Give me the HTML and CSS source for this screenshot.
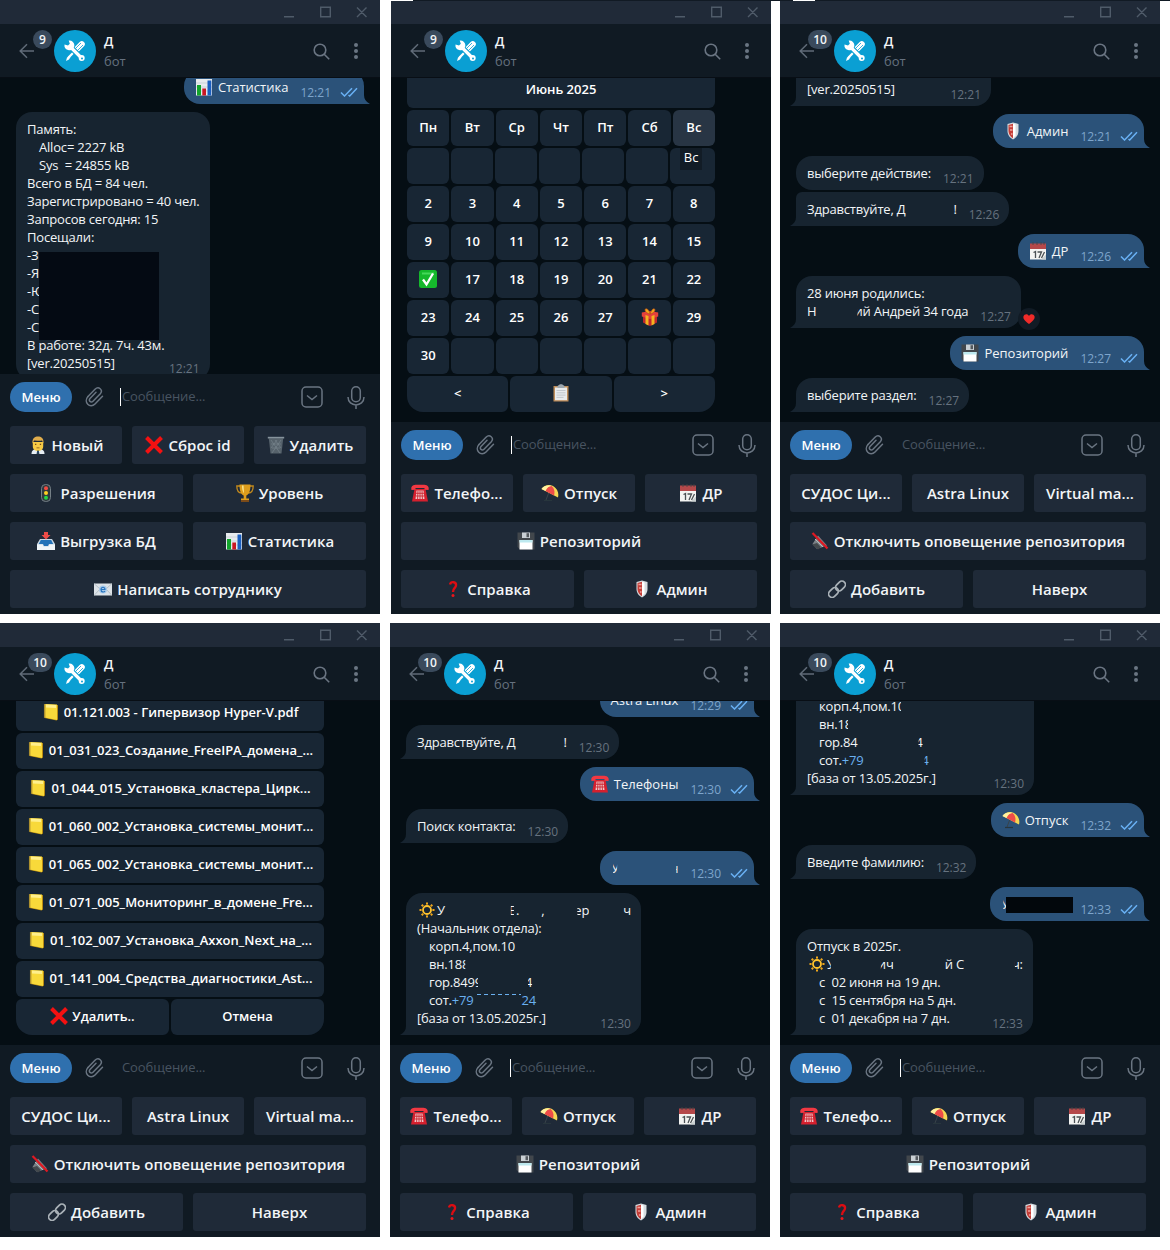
FILE: index.html
```html
<!DOCTYPE html>
<html lang="ru">
<head>
<meta charset="utf-8">
<title>Бот</title>
<link rel="stylesheet" href="styles.css">
</head>
<body>
<svg class="defs" xmlns="http://www.w3.org/2000/svg">
  <symbol id="wctl" viewBox="0 0 84 12"><g fill="none" stroke="#4f5b69" stroke-width="1.4"><path d="M0 10.7h10M36.700 1.200h9.600v9.600h-9.600zM73 1.500l9.500 9.500M82.500 1.500L73 11"/></g></symbol>
  <symbol id="back" viewBox="0 0 16 16"><path d="M15 8H1.500M8 1.200L1.200 8l6.800 6.800" fill="none" stroke="#606b78" stroke-width="1.500"/></symbol>
  <symbol id="tools" viewBox="0 0 24 24"><path d="M5.500 18.500L13 11" stroke="#fff" stroke-width="2.300"/><path d="M3 22l1-3.500 2.500-1.500 1 1-1.500 2.500z" fill="#fff"/><path d="M13.200 10.800L18.800 5.200" stroke="#fff" stroke-width="6" stroke-linecap="round"/><path d="M12.500 9.500L18 4M14.500 11.500L20 6" stroke="#0a9fd3" stroke-width=".8"/><path d="M7 7.500L18.500 19" stroke="#0a9fd3" stroke-width="5.500"/><path d="M7.500 8L18.500 19" stroke="#fff" stroke-width="3.200"/><circle cx="18.700" cy="19" r="3" fill="#fff"/><circle cx="19" cy="19.400" r="1" fill="#0a9fd3"/><path d="M1.500 5.500l3.500 1 1.800-1.800L5.700 1.500a5 5 0 0 1 5.300 6.800A5 5 0 0 1 1.500 5.500z" fill="#fff"/></symbol>
  <symbol id="search" viewBox="0 0 17 17"><g fill="none" stroke="#6a7582" stroke-width="1.600"><circle cx="7" cy="7" r="5.800"/><path d="M11.200 11.200l5 5"/></g></symbol>
  <symbol id="dots" viewBox="0 0 6 18"><g fill="#6a7582"><circle cx="3" cy="3" r="2"/><circle cx="3" cy="9" r="2"/><circle cx="3" cy="15" r="2"/></g></symbol>
  <symbol id="clip" viewBox="0 0 20 22"><path d="M3 10.500L10 3.300c3.500-3.500 8.500.5 5.300 4.500L8 15.200c-2 2-5-.5-3-2.700l6-6.200" transform="translate(1 0)" fill="none" stroke="#6a7582" stroke-width="1.500" stroke-linecap="round"/><path d="M3 10.500c-5 5.500 2 12.500 7 7.500l7.500-7.800" transform="translate(1 0)" fill="none" stroke="#6a7582" stroke-width="1.500" stroke-linecap="round"/></symbol>
  <symbol id="cmd" viewBox="0 0 22 22"><g fill="none" stroke="#6a7582" stroke-width="1.500"><rect x="1" y="1" width="20" height="20" rx="4"/><path d="M6 9.500l5 4 5-4"/></g></symbol>
  <symbol id="mic" viewBox="0 0 18 23"><g fill="none" stroke="#6a7582" stroke-width="1.500"><rect x="4.700" y=".8" width="8.600" height="15" rx="4.300"/><path d="M1 11c0 10.500 16 10.500 16 0M9 19v4"/></g></symbol>
  <symbol id="read" viewBox="0 0 18 10"><path d="M1 5.500l3.500 3.500L12 1.200M8.500 8l1.200 1L17 1.200" fill="none" stroke="#69b0f3" stroke-width="1.500"/></symbol>

  <symbol id="chart" viewBox="0 0 18 18"><path fill="#e7ebee" d="M1 1h16v16.500H1z"/><path d="M1 5h16M1 9h16M1 13h16" stroke="#b9c4cc" stroke-width=".6"/><path fill="#12a52c" d="M2 7h4v10.500H2z"/><path fill="#c91722" d="M7.300 10.500h3.700v7H7.300z"/><path fill="#1a5fc0" d="M12.500 2.500h3.800v15h-3.800z"/></symbol>
  <symbol id="man" viewBox="0 0 18 18"><path fill="#e6edf3" d="M2.500 18c0-4 2.500-5 6.500-5s6.500 1 6.500 5z"/><path fill="#f7cb45" d="M3.800 6h10.400v4.500c0 6-10.400 6-10.400 0z"/><path fill="#e0ad4c" d="M3.500 7.500C3 2 6 .5 9 .5s6 1.500 5.500 7L13 4.500C10 5.500 7 4 5 4.500z"/><path fill="#7d4a18" d="M6 7.800h1.300v1.200H6zM10.800 7.800h1.300v1.200h-1.300zM7.500 11.500h3v.8h-3z"/><path fill="#27435d" d="M8.200 14.500h1.600l.6 3.500H7.600z"/></symbol>
  <symbol id="cross" viewBox="0 0 18 18"><path d="M1.500 1.500l15 15M16.500 1.500l-15 15" stroke="#f41111" stroke-width="4"/></symbol>
  <symbol id="bin" viewBox="0 0 18 18"><path fill="#56626b" d="M1.800 2.500h14.400l-1.700 15h-11z"/><path d="M4 4l9 13M8 4l6 8M14 4L5 17M10 4l-6 8M4 8h10M5 12h8" stroke="#7c8992" stroke-width=".6"/><path fill="#86939c" d="M.8 .8h16.400v1.700H.8z"/></symbol>
  <symbol id="light" viewBox="0 0 18 18"><rect x="4.500" y=".5" width="9" height="17" rx="4" fill="#303a3f" stroke="#758087"/><circle cx="9" cy="4.300" r="2" fill="#f24b42"/><circle cx="9" cy="9" r="2" fill="#ffcf22"/><circle cx="9" cy="13.700" r="2" fill="#27d544"/></symbol>
  <symbol id="cup" viewBox="0 0 18 18"><path d="M4 2H.8c0 5 2 7 5 7M14 2h3.200c0 5-2 7-5 7" fill="none" stroke="#c48a1c" stroke-width="1.300"/><path fill="#dd9d1c" d="M3.500.5h11c0 6.500-1.500 10-4.200 11v3H13V18H5v-3.500h2.700v-3C5 10.500 3.500 7 3.500.5z"/><path fill="#fbe48a" d="M6 1.500h1.500l.5 8C6.500 7 6 5 6 1.500z"/><path fill="#7b4b19" d="M5 16h8v2H5z"/></symbol>
  <symbol id="outbox" viewBox="0 0 18 18"><path fill="#c6d5e2" d="M3 7h12l3 5v6H0v-6z"/><path fill="#2372b8" d="M3.800 8h10.400l2 4H12l-1 2H7l-1-2H1.800z"/><path fill="#f0f5f8" d="M0 12.500h5.500l1 2h5l1-2H18V18H0z"/><path fill="#ee4c47" d="M7 0h4v3h2.500L9 7.500 4.500 3H7z"/></symbol>
  <symbol id="email" viewBox="0 0 18 18"><path fill="#dce2e7" d="M0 3.500h18v12H0z"/><path d="M0 3.500l6 5.500-6 6.500M18 3.500L12 9l6 6.500" fill="none" stroke="#abb7c0" stroke-width=".8"/><circle cx="9" cy="9.500" r="4" fill="#a7c9ea"/><path d="M7 9.500h4c0-3-4-3-4 0s3 3 4 1.500" stroke="#2774bd" stroke-width="1.200" fill="none"/></symbol>
  <symbol id="phone" viewBox="0 0 18 18"><path fill="#d5202e" d="M3.500 5h11L17 17.500H1z"/><path fill="#f23842" d="M.5 6C-1 0 6 .8 9 .8S19 0 17.500 6l-4-.3V4h-9v1.700z"/><path fill="#f0c8cb" d="M5.500 6.500h7l1 8.500h-9z"/><path d="M7 6.500L6.600 15M9 6.500V15M11 6.500l.4 8.500M5 9.300h8M4.800 12h8.400" stroke="#cc2631" stroke-width=".9"/></symbol>
  <symbol id="umb" viewBox="0 0 18 18"><path d="M8 8L5 16" stroke="#39434a" stroke-width="1"/><path d="M3 16.500h8" stroke="#28363d" stroke-width="1.200"/><path fill="#f5d653" d="M.5 5C4 0 11 0 14.500 4c2.500 2.500 3.500 6 2.500 9.500z"/><path fill="#ee4c49" d="M4.500 7C6 3 9 1.800 10.500 2c3 2.500 3.500 6 2.500 9.500z"/><path fill="#fff1a0" d="M.5 5C3 1.500 7 1 10.500 2 7.500 2.500 5.500 4 4.500 7z"/></symbol>
  <symbol id="cal" viewBox="0 0 18 18"><path fill="#f4f4f2" d="M1 2h16v15.500H1z"/><path fill="#b5484a" d="M1 1.500h16V7H1z"/><path d="M4 0v3M8 0v3M12 0v3M15 0v3" stroke="#444" stroke-width=".8"/><path fill="#cbd1d2" d="M12 17.500l5-5v5z"/><path d="M4.500 10.500l2-1V16M8.500 10h4L10 16M15.500 10l-3 6" fill="none" stroke="#4b5154" stroke-width="1.300"/></symbol>
  <symbol id="disk" viewBox="0 0 18 18"><path fill="#42474c" d="M.5.500h17v17H3L.5 15z"/><path fill="#c9cfd4" d="M5 .5h8V6H5z"/><path fill="#53585d" d="M9.500 1.200H12v4H9.500z"/><path fill="#fff" d="M2.500 8h13v9.500h-13z"/><path fill="#bde9ef" d="M2.500 8h13v2.500h-13z"/></symbol>
  <symbol id="quest" viewBox="0 0 18 18"><path d="M6 4.500C7 1 12.500 1.500 12 5.500 11.800 8 9 8 9 12" fill="none" stroke="#dc0d13" stroke-width="2.400"/><circle cx="9" cy="15.500" r="1.500" fill="#ed151b"/></symbol>
  <symbol id="shield" viewBox="0 0 18 18"><path fill="#d6dce0" d="M3.500 2L9 .5 14.500 2v7c0 4-2.500 7-5.500 8.500C6 16 3.500 13 3.500 9z"/><path fill="#c43e38" d="M4.500 3L9 1.700v14.600C6.500 15 4.500 12 4.500 9z"/><path d="M5.500 4.500h3M6 8h2.500M7 12h1.500" stroke="#f0a19a" stroke-width="1.300"/><path fill="#fff" d="M9 1.700l2.500.8v11L9 16.300z"/></symbol>
  <symbol id="mute" viewBox="0 0 18 18"><path fill="#7c8287" d="M1.500 12L7 3.500l9 10L6 17z"/><path fill="#42484c" d="M1 12.500l5-1.500 4 4-3 2.500z"/><path d="M4 7l8 8" stroke="#b4babd"/><path d="M1.500 1l15 15.500" stroke="#e01822" stroke-width="2.200"/></symbol>
  <symbol id="link" viewBox="0 0 18 18"><g fill="none" stroke="#aab2b8" stroke-width="1.700"><rect x="7" y="2.500" width="11" height="7" rx="3.500" transform="rotate(-45 12.500 6)"/><rect x="0" y="9" width="11" height="7" rx="3.500" transform="rotate(-45 5.500 12.500)"/></g></symbol>
  <symbol id="book" viewBox="0 0 18 18"><path fill="#b88a11" d="M2.500 1.500l13.500.5v14.500l-1.500 1L2.500 15z"/><path fill="#f8d93a" d="M2.500 1l12.500.5v15.500L2.500 14.500z"/><path fill="#ffef8c" d="M4 1.500l10 .5v3L4 4.500z"/><path d="M2.800 1.500v13" stroke="#a88830" stroke-width="1.800" stroke-dasharray="1 1"/></symbol>
  <symbol id="ok" viewBox="0 0 18 18"><rect width="18" height="18" rx="2.500" fill="#15b82c"/><path d="M3 3.500h12" stroke="#45d85a" stroke-width="2"/><path d="M4 9.500l3.500 5L14 3.500" fill="none" stroke="#fff" stroke-width="2.300"/></symbol>
  <symbol id="gift" viewBox="0 0 18 18"><path fill="#c0272d" d="M2 8l7 2 7-2v6.500L9 18l-7-3.500z"/><path fill="#e5413b" d="M.8 4.500L9 3l8.200 1.500v4L9 11 .8 8.500z"/><path fill="#f3b51f" d="M4.500 7l3 1v9.500l-3-1.500zM10.500 8l3-1v9l-3 1.500z"/><path d="M9 6C4 5 3 1 5 .8 7.500.5 9 5 9 6s1.500-5.500 4-5.200C15 1 14 5 9 6z" fill="#f3a81d" stroke="#b94c17" stroke-width=".7"/></symbol>
  <symbol id="board" viewBox="0 0 18 18"><path fill="#bd8d5a" d="M1.500 2h15v15.500h-15z"/><path fill="#e8ebed" d="M3 3.500h12v12.700H3z"/><path d="M4.500 6.500h9M4.500 8.800h9M4.500 11.100h9M4.500 13.400h7" stroke="#b7bfc5" stroke-width=".8"/><path fill="#9ca6ae" d="M5.500 2L8 .3h2L12.500 2v2h-7z"/></symbol>
  <symbol id="sun" viewBox="0 0 18 18"><path d="M9 1.500v15M1.500 9h15M3.700 3.700l10.600 10.600M14.300 3.700L3.700 14.300" stroke="#eea61c" stroke-width="2"/><circle cx="9" cy="9" r="5.500" fill="#182533"/><circle cx="9" cy="9" r="4" fill="#182533" stroke="#ffc32d" stroke-width="1.800"/></symbol>
  <symbol id="heart" viewBox="0 0 12 12"><path fill="#ef2b29" d="M6 11C1 7.500 0 5.500.5 3.300 1.200.8 4.700.3 6 3c1.300-2.700 4.800-2.200 5.500.3C12 5.500 11 7.500 6 11z"/></symbol>
</svg>

<div class="edge"><span></span><span></span></div>

<main class="board">
  <!-- Статистика -->
  <section class="window">
    <div class="titlebar"><svg class="wctl"><use href="#wctl"/></svg></div>
    <header class="head">
      <svg class="back"><use href="#back"/></svg><span class="badge round">9</span>
      <div class="avatar"><svg><use href="#tools"/></svg></div>
      <div class="peer"><b>Д</b><span>бот</span></div>
      <svg class="search"><use href="#search"/></svg><svg class="dots"><use href="#dots"/></svg>
    </header>
    <div class="chat scrolled">
      <div class="msg out"><div class="line"><svg class="em"><use href="#chart"/></svg>Статистика<time>12:21</time><svg class="read"><use href="#read"/></svg></div></div>
      <div class="msg in">
        <div class="line">Память:</div>
        <div class="line sub">Alloc= 2227 kB</div>
        <div class="line sub">Sys  = 24855 kB</div>
        <div class="line">Всего в БД = 84 чел.</div>
        <div class="line">Зарегистрировано = 40 чел.</div>
        <div class="line">Запросов сегодня: 15</div>
        <div class="line">Посещали:</div>
        <div class="hidden-names">
          <div class="line">-З</div><div class="line">-Я</div><div class="line">-Ю</div><div class="line">-С</div><div class="line">-С</div>
        </div>
        <div class="line">В работе: 32д. 7ч. 43м.</div>
        <div class="line">[ver.20250515]<time>12:21</time></div>
      </div>
    </div>
    <div class="compose"><span class="menu">Меню</span><svg class="clip"><use href="#clip"/></svg><span class="field caret">Сообщение...</span><svg class="cmd"><use href="#cmd"/></svg><svg class="mic"><use href="#mic"/></svg></div>
    <div class="keys">
      <div class="row"><span><svg class="em"><use href="#man"/></svg>Новый</span><span><svg class="em"><use href="#cross"/></svg>Сброс id</span><span><svg class="em"><use href="#bin"/></svg>Удалить</span></div>
      <div class="row"><span><svg class="em"><use href="#light"/></svg>Разрешения</span><span><svg class="em"><use href="#cup"/></svg>Уровень</span></div>
      <div class="row"><span><svg class="em"><use href="#outbox"/></svg>Выгрузка БД</span><span><svg class="em"><use href="#chart"/></svg>Статистика</span></div>
      <div class="row"><span><svg class="em"><use href="#email"/></svg>Написать сотруднику</span></div>
    </div>
  </section>

  <!-- Календарь -->
  <section class="window shifted">
    <div class="titlebar"><svg class="wctl"><use href="#wctl"/></svg></div>
    <header class="head">
      <svg class="back"><use href="#back"/></svg><span class="badge round">9</span>
      <div class="avatar"><svg><use href="#tools"/></svg></div>
      <div class="peer"><b>Д</b><span>бот</span></div>
      <svg class="search"><use href="#search"/></svg><svg class="dots"><use href="#dots"/></svg>
    </header>
    <div class="chat">
      <div class="inline">
        <div class="irow"><span>Июнь 2025</span></div>
        <div class="irow"><span>Пн</span><span>Вт</span><span>Ср</span><span>Чт</span><span>Пт</span><span>Сб</span><span class="hover">Вс</span></div>
        <div class="irow"><span></span><span></span><span></span><span></span><span></span><span></span><span class="tipped"><i class="tip">Вс</i></span></div>
        <div class="irow"><span>2</span><span>3</span><span>4</span><span>5</span><span>6</span><span>7</span><span>8</span></div>
        <div class="irow"><span>9</span><span>10</span><span>11</span><span>12</span><span>13</span><span>14</span><span>15</span></div>
        <div class="irow"><span class="pic"><svg class="em"><use href="#ok"/></svg></span><span>17</span><span>18</span><span>19</span><span>20</span><span>21</span><span>22</span></div>
        <div class="irow"><span>23</span><span>24</span><span>25</span><span>26</span><span>27</span><span class="pic"><svg class="em"><use href="#gift"/></svg></span><span>29</span></div>
        <div class="irow"><span>30</span><span></span><span></span><span></span><span></span><span></span><span></span></div>
        <div class="irow"><span>&lt;</span><span class="pic"><svg class="em"><use href="#board"/></svg></span><span>&gt;</span></div>
      </div>
    </div>
    <div class="compose"><span class="menu">Меню</span><svg class="clip"><use href="#clip"/></svg><span class="field caret">Сообщение...</span><svg class="cmd"><use href="#cmd"/></svg><svg class="mic"><use href="#mic"/></svg></div>
    <div class="keys">
      <div class="row"><span><svg class="em"><use href="#phone"/></svg>Телефо...</span><span><svg class="em"><use href="#umb"/></svg>Отпуск</span><span><svg class="em"><use href="#cal"/></svg>ДР</span></div>
      <div class="row"><span><svg class="em"><use href="#disk"/></svg>Репозиторий</span></div>
      <div class="row"><span><svg class="em"><use href="#quest"/></svg>Справка</span><span><svg class="em"><use href="#shield"/></svg>Админ</span></div>
    </div>
  </section>

  <!-- Репозиторий -->
  <section class="window">
    <div class="titlebar"><svg class="wctl"><use href="#wctl"/></svg></div>
    <header class="head">
      <svg class="back"><use href="#back"/></svg><span class="badge">10</span>
      <div class="avatar"><svg><use href="#tools"/></svg></div>
      <div class="peer"><b>Д</b><span>бот</span></div>
      <svg class="search"><use href="#search"/></svg><svg class="dots"><use href="#dots"/></svg>
    </header>
    <div class="chat">
      <div class="msg in tail cropped stat-width"><div class="line">[ver.20250515]<time>12:21</time></div></div>
      <div class="msg out"><div class="line"><svg class="em"><use href="#shield"/></svg>Админ<time>12:21</time><svg class="read"><use href="#read"/></svg></div></div>
      <div class="msg in"><div class="line">выберите действие:<time>12:21</time></div></div>
      <div class="msg in tail joined"><div class="line">Здравствуйте, Д<i class="gap w48"></i>!<time>12:26</time></div></div>
      <div class="msg out"><div class="line"><svg class="em"><use href="#cal"/></svg>ДР<time>12:26</time><svg class="read"><use href="#read"/></svg></div></div>
      <div class="msg in tail"><div class="line">28 июня родились:</div><div class="line">Н<i class="gap w38"></i><span class="cut-l">ий</span> Андрей 34 года<time>12:27</time></div><span class="react"><svg><use href="#heart"/></svg></span></div>
      <div class="msg out"><div class="line"><svg class="em"><use href="#disk"/></svg>Репозиторий<time>12:27</time><svg class="read"><use href="#read"/></svg></div></div>
      <div class="msg in tail"><div class="line">выберите раздел:<time>12:27</time></div></div>
    </div>
    <div class="compose"><span class="menu">Меню</span><svg class="clip"><use href="#clip"/></svg><span class="field">Сообщение...</span><svg class="cmd"><use href="#cmd"/></svg><svg class="mic"><use href="#mic"/></svg></div>
    <div class="keys">
      <div class="row"><span>СУДОС Ци...</span><span>Astra Linux</span><span>Virtual ma...</span></div>
      <div class="row"><span><svg class="em"><use href="#mute"/></svg>Отключить оповещение репозитория</span></div>
      <div class="row"><span><svg class="em"><use href="#link"/></svg>Добавить</span><span>Наверх</span></div>
    </div>
  </section>

  <!-- Файлы -->
  <section class="window">
    <div class="titlebar"><svg class="wctl"><use href="#wctl"/></svg></div>
    <header class="head">
      <svg class="back"><use href="#back"/></svg><span class="badge">10</span>
      <div class="avatar"><svg><use href="#tools"/></svg></div>
      <div class="peer"><b>Д</b><span>бот</span></div>
      <svg class="search"><use href="#search"/></svg><svg class="dots"><use href="#dots"/></svg>
    </header>
    <div class="chat">
      <div class="inline">
        <div class="irow"><span><svg class="em"><use href="#book"/></svg>01.121.003 - Гипервизор Hyper-V.pdf</span></div>
        <div class="irow"><span><svg class="em"><use href="#book"/></svg>01_031_023_Создание_FreeIPA_домена_...</span></div>
        <div class="irow"><span><svg class="em"><use href="#book"/></svg>01_044_015_Установка_кластера_Цирк...</span></div>
        <div class="irow"><span><svg class="em"><use href="#book"/></svg>01_060_002_Установка_системы_монит...</span></div>
        <div class="irow"><span><svg class="em"><use href="#book"/></svg>01_065_002_Установка_системы_монит...</span></div>
        <div class="irow"><span><svg class="em"><use href="#book"/></svg>01_071_005_Мониторинг_в_домене_Fre...</span></div>
        <div class="irow"><span><svg class="em"><use href="#book"/></svg>01_102_007_Установка_Axxon_Next_на_...</span></div>
        <div class="irow"><span><svg class="em"><use href="#book"/></svg>01_141_004_Средства_диагностики_Ast...</span></div>
        <div class="irow"><span><svg class="em"><use href="#cross"/></svg>Удалить..</span><span>Отмена</span></div>
      </div>
    </div>
    <div class="compose"><span class="menu">Меню</span><svg class="clip"><use href="#clip"/></svg><span class="field">Сообщение...</span><svg class="cmd"><use href="#cmd"/></svg><svg class="mic"><use href="#mic"/></svg></div>
    <div class="keys">
      <div class="row"><span>СУДОС Ци...</span><span>Astra Linux</span><span>Virtual ma...</span></div>
      <div class="row"><span><svg class="em"><use href="#mute"/></svg>Отключить оповещение репозитория</span></div>
      <div class="row"><span><svg class="em"><use href="#link"/></svg>Добавить</span><span>Наверх</span></div>
    </div>
  </section>

  <!-- Телефоны -->
  <section class="window">
    <div class="titlebar"><svg class="wctl"><use href="#wctl"/></svg></div>
    <header class="head">
      <svg class="back"><use href="#back"/></svg><span class="badge">10</span>
      <div class="avatar"><svg><use href="#tools"/></svg></div>
      <div class="peer"><b>Д</b><span>бот</span></div>
      <svg class="search"><use href="#search"/></svg><svg class="dots"><use href="#dots"/></svg>
    </header>
    <div class="chat">
      <div class="msg out"><div class="line">Astra Linux<time>12:29</time><svg class="read"><use href="#read"/></svg></div></div>
      <div class="msg in tail"><div class="line">Здравствуйте, Д<i class="gap w48"></i>!<time>12:30</time></div></div>
      <div class="msg out"><div class="line"><svg class="em"><use href="#phone"/></svg>Телефоны<time>12:30</time><svg class="read"><use href="#read"/></svg></div></div>
      <div class="msg in tail"><div class="line">Поиск контакта:<time>12:30</time></div></div>
      <div class="msg out"><div class="line"><span class="cut-half">У</span><i class="gap w51"></i><span class="cut-stem">н</span><time>12:30</time><svg class="read"><use href="#read"/></svg></div></div>
      <div class="msg in tail">
        <div class="line"><svg class="em sun"><use href="#sun"/></svg>У<i class="gap w64"></i><span class="cut-half">Е</span>.<i class="gap w22"></i>,<i class="gap w30"></i><span class="cut-l">ер</span><i class="gap w34"></i>ч</div>
        <div class="line">(Начальник отдела):</div>
        <div class="line sub">корп.4,пом.10</div>
        <div class="line sub">вн.18<span class="cut-r">8</span></div>
        <div class="line sub">гор.849<span class="cut-r">9</span><i class="gap w43"></i><span class="cut-l">4</span></div>
        <div class="line sub">сот.<a>+79<i class="gap w48 dashes"></i>24</a></div>
        <div class="line">[база от 13.05.2025г.]<time>12:30</time></div>
      </div>
    </div>
    <div class="compose"><span class="menu">Меню</span><svg class="clip"><use href="#clip"/></svg><span class="field caret">Сообщение...</span><svg class="cmd"><use href="#cmd"/></svg><svg class="mic"><use href="#mic"/></svg></div>
    <div class="keys">
      <div class="row"><span><svg class="em"><use href="#phone"/></svg>Телефо...</span><span><svg class="em"><use href="#umb"/></svg>Отпуск</span><span><svg class="em"><use href="#cal"/></svg>ДР</span></div>
      <div class="row"><span><svg class="em"><use href="#disk"/></svg>Репозиторий</span></div>
      <div class="row"><span><svg class="em"><use href="#quest"/></svg>Справка</span><span><svg class="em"><use href="#shield"/></svg>Админ</span></div>
    </div>
  </section>

  <!-- Отпуск -->
  <section class="window">
    <div class="titlebar"><svg class="wctl"><use href="#wctl"/></svg></div>
    <header class="head">
      <svg class="back"><use href="#back"/></svg><span class="badge">10</span>
      <div class="avatar"><svg><use href="#tools"/></svg></div>
      <div class="peer"><b>Д</b><span>бот</span></div>
      <svg class="search"><use href="#search"/></svg><svg class="dots"><use href="#dots"/></svg>
    </header>
    <div class="chat">
      <div class="msg in tail cropped contact-width">
        <div class="line sub">корп.4,пом.1<span class="cut-r">0</span></div>
        <div class="line sub">вн.1<span class="cut-r">8</span></div>
        <div class="line sub">гор.84<i class="gap w58"></i><span class="cut-l">4</span></div>
        <div class="line sub">сот.<a>+79<i class="gap w58"></i><span class="cut-l">4</span></a></div>
        <div class="line">[база от 13.05.2025г.]<time>12:30</time></div>
      </div>
      <div class="msg out"><div class="line"><svg class="em"><use href="#umb"/></svg>Отпуск<time>12:32</time><svg class="read"><use href="#read"/></svg></div></div>
      <div class="msg in tail"><div class="line">Введите фамилию:<time>12:32</time></div></div>
      <div class="msg out"><div class="line"><span class="cut-half">У</span><i class="gap w60 bar"></i><time>12:33</time><svg class="read"><use href="#read"/></svg></div></div>
      <div class="msg in tail">
        <div class="line">Отпуск в 2025г.</div>
        <div class="line"><svg class="em sun"><use href="#sun"/></svg><span class="cut-r">У</span><i class="gap w43"></i><span class="cut-l">ич</span><i class="gap w51"></i>й С<i class="gap w48"></i><span class="cut-l">ч</span>:</div>
        <div class="line sub">с  02 июня на 19 дн.</div>
        <div class="line sub">с  15 сентября на 5 дн.</div>
        <div class="line sub">с  01 декабря на 7 дн.<time>12:33</time></div>
      </div>
    </div>
    <div class="compose"><span class="menu">Меню</span><svg class="clip"><use href="#clip"/></svg><span class="field caret">Сообщение...</span><svg class="cmd"><use href="#cmd"/></svg><svg class="mic"><use href="#mic"/></svg></div>
    <div class="keys">
      <div class="row"><span><svg class="em"><use href="#phone"/></svg>Телефо...</span><span><svg class="em"><use href="#umb"/></svg>Отпуск</span><span><svg class="em"><use href="#cal"/></svg>ДР</span></div>
      <div class="row"><span><svg class="em"><use href="#disk"/></svg>Репозиторий</span></div>
      <div class="row"><span><svg class="em"><use href="#quest"/></svg>Справка</span><span><svg class="em"><use href="#shield"/></svg>Админ</span></div>
    </div>
  </section>
</main>
</body>
</html>
```
FILE: styles.css
```css
* { box-sizing: border-box; }
body { margin: 0; background: #fff; font: 13px/18px "Open Sans", "Noto Sans", sans-serif; color: #f2f5f7; }
svg { display: block; flex: none; }
i { font-style: normal; }
.defs { position: absolute; width: 0; height: 0; }

/* hairline along the top edge of the sheet */
.edge { position: absolute; z-index: 2; top: 0; left: 390px; right: 0; height: 1px; background: #111a24; display: flex; }
.edge span { width: 23px; background: #fff; }
.edge span + span { margin-left: 380px; width: 22px; }

.board { display: grid; grid-template-columns: repeat(3, 380px); grid-auto-rows: 614px; gap: 9px 10px; }
.window { display: flex; flex-direction: column; min-width: 0; background: #101a23; overflow: hidden; width: 380px; }
.shifted { margin-left: 1px; }

.titlebar { height: 24px; background: #202a38; display: flex; justify-content: flex-end; align-items: flex-start; padding: 6px 12px 0 0; }
.wctl { width: 84px; height: 12px; }

.head { height: 54px; display: flex; align-items: center; padding: 0 21px 0 19px; border-bottom: 1px solid #080e15; }
.back { width: 16px; height: 16px; }
.badge { width: 24px; height: 19px; margin: -23px 0 0 -7px; border-radius: 10px; background: #3a4a5c; font-size: 12px; font-weight: 600; line-height: 19px; text-align: center; }
.round { width: 19px; margin-left: -2px; }
.avatar { width: 42px; height: 42px; margin-left: 2px; border-radius: 50%; background: #0a9fd3; display: grid; place-items: center; }
.avatar svg { width: 24px; height: 24px; }
.peer { display: flex; flex-direction: column; margin-left: 8px; flex: 1; gap: 2px; }
.peer b { font-weight: 600; }
.peer span { color: #65717f; }
.search { width: 17px; height: 17px; margin-right: 23px; margin-top: 1px; }
.dots { width: 6px; height: 18px; }

.chat { flex: 1; min-height: 0; overflow: hidden; display: flex; flex-direction: column; justify-content: flex-end; gap: 8px; padding: 0 16px 10px; background: #050e14; }
.chat > * { flex: none; }
.scrolled { padding-bottom: 0; }
.scrolled .msg:last-child { margin-bottom: -6px; }

.msg { position: relative; padding: 8px 10px 8px 11px; border-radius: 16px; }
.in { align-self: flex-start; background: #172430; letter-spacing: -.19px; }
.out { align-self: flex-end; background: #2b5279; border-bottom-right-radius: 0; padding-right: 6px; }
.tail { border-bottom-left-radius: 0; }
.joined { margin-top: -6px; border-top-left-radius: 6px; }
.cropped { border-top-left-radius: 0; border-top-right-radius: 0; padding-top: 26px; }
.stat-width { width: 195px; }
.contact-width { width: 238px; }
.tail::before, .out::before { content: ""; position: absolute; bottom: 0; width: 7px; height: 9px; background: inherit; }
.tail::before { left: -6px; clip-path: path("M7 0H6Q6 6 0 9H7Z"); }
.out::before { right: -6px; clip-path: path("M0 0H1Q1 6 7 9H0Z"); }
.line { display: flex; align-items: center; height: 18px; white-space: pre; }
.sub { padding-left: 12px; }
.line a { display: flex; color: #6ab0f0; }
.em { width: 18px; height: 18px; margin-right: 5px; }
.sun { margin: 0 1px 0 1px; }
time { margin-left: auto; padding-left: 12px; font-size: 12px; letter-spacing: 0; position: relative; top: 6px; color: #66727f; }
.out time { color: #7ea5cc; }
.read { width: 18px; height: 10px; margin-left: 9px; position: relative; top: 5px; }
.react { position: absolute; right: -19px; bottom: -2px; width: 22px; height: 22px; border-radius: 50%; background: #111b25; display: grid; place-items: center; }
.react svg { width: 12px; height: 12px; }

/* names and numbers blanked out of the messages */
.hidden-names { position: relative; }
.hidden-names::after { content: ""; position: absolute; left: 12px; top: 6px; width: 120px; height: 88px; background: #040a13; }
.gap { display: block; flex: none; height: 16px; }
.w22 { width: 22px; } .w30 { width: 30px; } .w34 { width: 34px; } .w38 { width: 38px; } .w43 { width: 43px; } .w48 { width: 48px; }
.w51 { width: 51px; } .w58 { width: 58px; } .w60 { width: 60px; } .w64 { width: 64px; }
.bar { background: #02070c; width: 67px; margin: 0 -5px 0 -3px; z-index: 1; position: relative; top: 1px; }
.dashes { background: repeating-linear-gradient(90deg, #6ab0f0 0 4px, transparent 4px 7px) 3px 3px / 44px 1px no-repeat; }
.cut-l { clip-path: inset(0 0 0 3px); }
.cut-r { clip-path: inset(0 4px 0 0); }
.cut-half { clip-path: inset(4px 2px 0 2px); }
.cut-stem { clip-path: inset(0 0 0 6px); }

.inline { width: 308px; display: flex; flex-direction: column; gap: 2px; }
.irow { display: flex; gap: 2px; height: 36px; }
.irow > span { flex: 1 1 0; display: flex; align-items: center; justify-content: center; padding-bottom: 2px; background: #182634; border-radius: 6px; font-weight: 600; white-space: nowrap; color: #fff; }
.irow .em { margin-right: 4px; }
.irow > .pic > .em { margin: 0; }
.irow > .hover { background: #283544; }
.irow > .tipped { align-items: flex-start; padding: 0 3px 0 0; }
.tip { padding: 0 4px; height: 22px; background: #121c26; font-weight: 400; }
.irow:last-child > span:first-child { border-bottom-left-radius: 16px; }
.irow:last-child > span:last-child { border-bottom-right-radius: 16px; }

.compose { height: 52px; display: flex; align-items: center; padding: 0 15px 6px 10px; }
.menu { width: 62px; height: 30px; border-radius: 15px; background: #2f70ae; font-weight: 600; line-height: 30px; text-align: center; color: #fff; }
.clip { width: 20px; height: 22px; margin-left: 12px; }
.field { flex: 1; height: 18px; line-height: 16px; margin-left: 16px; padding-left: 1px; border-left: 1px solid transparent; color: #485461; letter-spacing: -.1px; }
.caret { border-color: #fff; }
.cmd { width: 22px; height: 22px; }
.mic { width: 18px; height: 23px; margin-left: 24px; }

.keys { display: flex; flex-direction: column; gap: 10px; padding: 0 14px 6px 10px; }
.row { display: flex; gap: 10px; }
.row > span { flex: 1 1 0; height: 38px; display: flex; align-items: center; justify-content: center; background: #1f2a38; border-radius: 3px; font-size: 15px; font-weight: 600; white-space: nowrap; letter-spacing: .03px; }
.row .em { margin-right: 5px; }
```
